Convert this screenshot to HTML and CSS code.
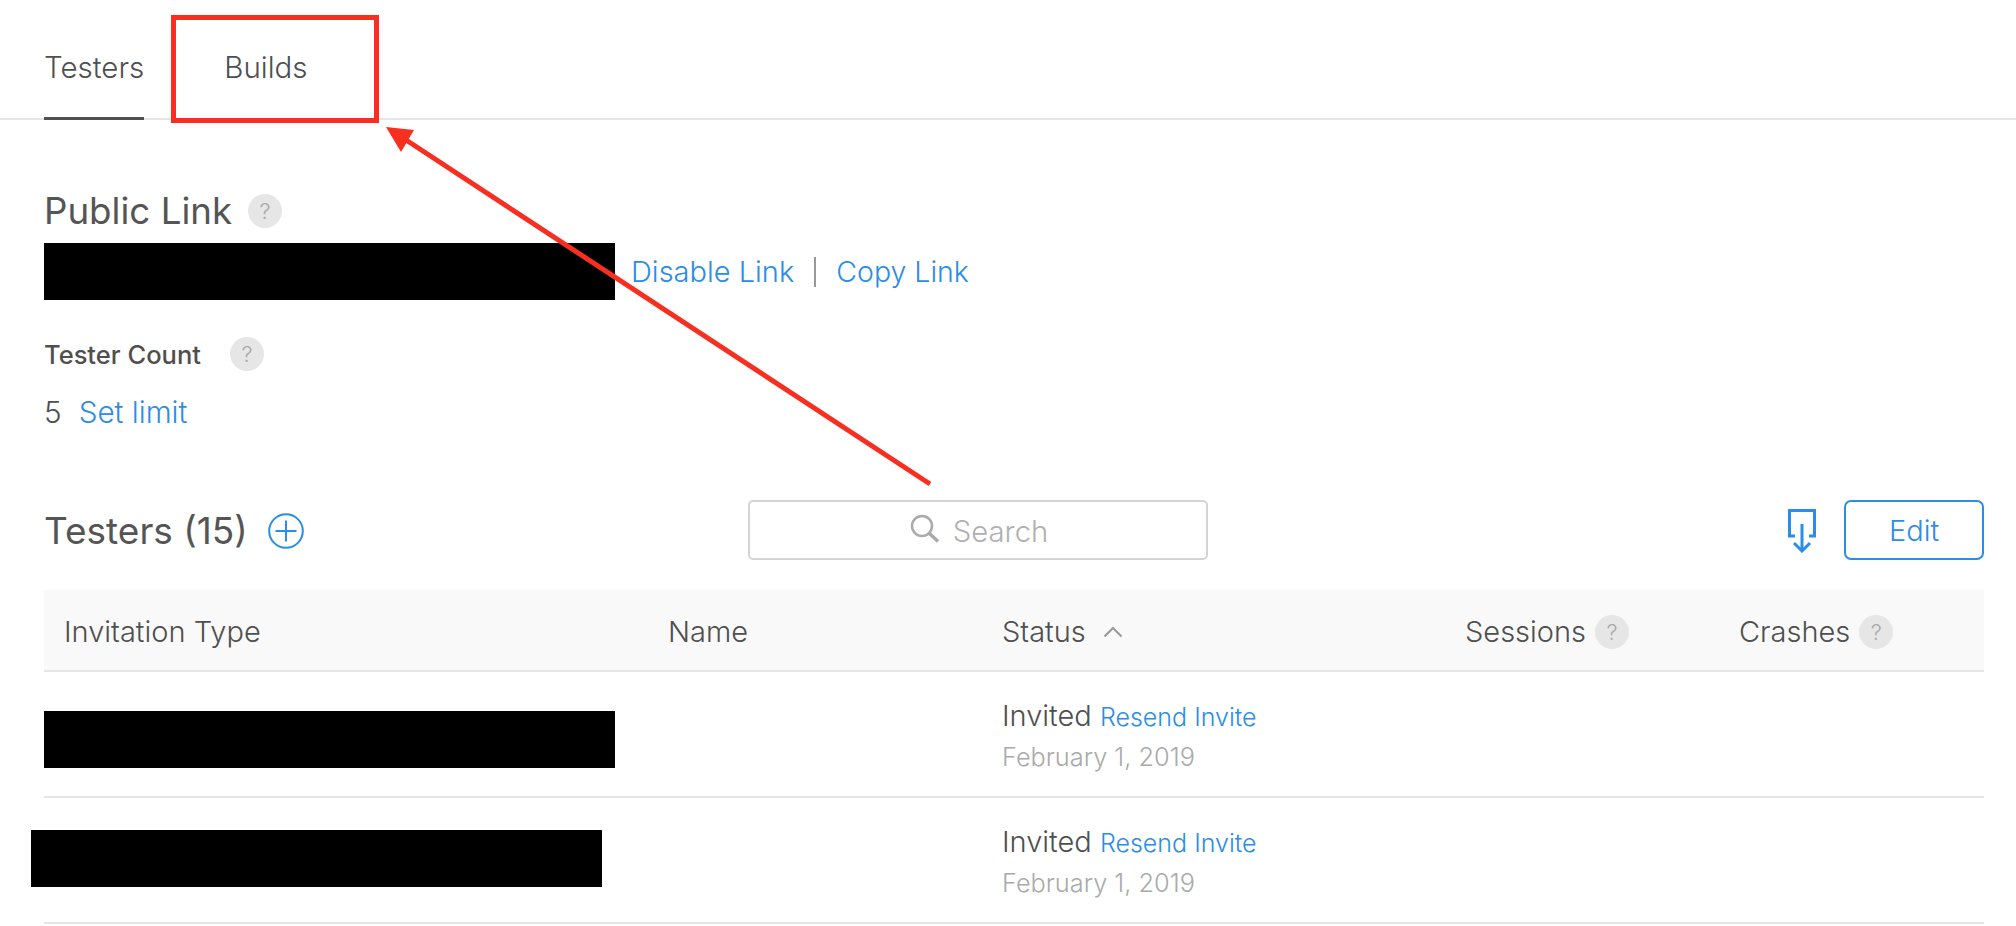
FILE: index.html
```html
<!DOCTYPE html>
<html lang="en">
<head>
<meta charset="utf-8">
<title>Testers</title>
<link rel="stylesheet" href="styles.css">
</head>
<body>
<div class="page">
  <nav class="tabs">
    <a class="tab tab-active">Testers</a>
    <a class="tab">Builds</a>
  </nav>

  <section class="public">
    <h2 class="title">Public Link <span class="help help-title">?</span></h2>
    <div class="link-row">
      <div class="redact"></div>
      <a class="link link-first">Disable Link</a>
      <span class="sep"></span>
      <a class="link link-copy">Copy Link</a>
    </div>
    <div class="count-label"><span>Tester Count</span><span class="help help-count">?</span></div>
    <div class="count-row"><span>5</span><a class="link">Set limit</a></div>
  </section>

  <section class="toolbar">
    <div class="toolbar-left">
      <h2 class="title title-large">Testers (15)</h2>
      <svg class="plus" viewBox="0 0 36 36" aria-hidden="true"><circle cx="18" cy="18" r="16.8"/><path d="M18 7.5v21M7.5 18h21"/></svg>
    </div>
    <div class="search">
      <svg class="search-icon" viewBox="0 0 30 30" aria-hidden="true"><circle cx="12" cy="12" r="10"/><path class="handle" d="M19.5 19.5l8.5 8"/></svg>
      <span>Search</span>
    </div>
    <div class="toolbar-right">
      <svg class="export" viewBox="0 0 28 44" aria-hidden="true"><path d="M7 27H1.500V1.500h25V27H21"/><path d="M14 15v27M6 34l8 8 8-8"/></svg>
      <button class="edit">Edit</button>
    </div>
  </section>

  <section class="table">
    <div class="thead">
      <div>Invitation Type</div>
      <div>Name</div>
      <div class="th-inline">Status <svg class="sort" viewBox="0 0 20 12" aria-hidden="true"><path d="M1.500 10.500L10 2l8.500 8.500"/></svg></div>
      <div class="th-inline">Sessions <span class="help help-th">?</span></div>
      <div class="th-inline">Crashes <span class="help help-th">?</span></div>
    </div>
    <div class="trow">
      <div class="redact redact-one"></div>
      <div class="status">
        <div class="status-line">Invited <a class="resend">Resend Invite</a></div>
        <div class="date">February 1, 2019</div>
      </div>
    </div>
    <div class="trow">
      <div class="redact redact-two"></div>
      <div class="status">
        <div class="status-line">Invited <a class="resend">Resend Invite</a></div>
        <div class="date">February 1, 2019</div>
      </div>
    </div>
  </section>

  <div class="callout-box"></div>
  <svg class="callout-arrow" viewBox="0 0 2016 926" aria-hidden="true">
    <path class="arrow-line" d="M930 484L400 136"/>
    <path class="arrow-head" d="M386 127L414 130L401 152Z"/>
  </svg>
</div>
</body>
</html>
```

FILE: styles.css
```css
* { box-sizing: border-box; }
html, body { margin: 0; height: 100%; }
body { background: #fff; color: #4f4f4f; font-family: Inter, "Liberation Sans", sans-serif; font-weight: 300; overflow: hidden; }
.page { position: relative; width: 2016px; height: 926px; overflow: hidden; }

.tabs { display: flex; gap: 80px; height: 120px; padding: 0 44px; border-bottom: 2px solid #e6e6e6; }
.tab { height: 120px; padding-top: 49px; font-size: 29.500px; line-height: 36px; }
.tab-active { border-bottom: 3px solid #505050; }

.public { padding: 71px 44px 0; }
.title { margin: 0; display: flex; align-items: center; font-size: 36.700px; font-weight: 400; line-height: 40px; color: #555; }
.title-large { font-size: 37px; }
.help { display: inline-flex; align-items: center; justify-content: center; border-radius: 50%; background: #e6e6e6; color: #aaa; font-weight: 300; flex: none; }
.help-title { width: 34px; height: 34px; margin-left: 16px; font-size: 22px; }
.link-row { display: flex; align-items: center; height: 57px; margin-top: 12px; font-size: 29px; }
.redact { width: 571px; height: 57px; background: #000; flex: none; }
.link { color: #2a8de6; text-decoration: none; }
.link-first { margin-left: 16px; }
.link-copy { font-size: 28.500px; }
.sep { width: 2px; height: 30px; margin: 0 20px 0 20px; background: #999; }
.count-label { display: flex; align-items: center; height: 34px; margin-top: 37px; font-size: 25.500px; font-weight: 500; }
.help-count { width: 34px; height: 34px; margin-left: 29px; font-size: 22px; }
.count-row { display: flex; gap: 17px; margin-top: 23px; font-size: 29.700px; line-height: 36px; }

.toolbar { display: grid; grid-template-columns: 704px 460px 1fr; align-items: center; height: 60px; margin: 70px 32px 0 44px; }
.toolbar-left { display: flex; align-items: center; padding-top: 2px; }
.plus { width: 36px; height: 36px; margin-left: 20px; fill: none; stroke: #2a8de6; stroke-width: 2; }
.search { display: flex; align-items: center; justify-content: center; gap: 13px; height: 60px; padding: 2px 0 0 2px; border: 2px solid #d4d4d4; border-radius: 5px; color: #b0b0b0; font-size: 29.300px; }
.search-icon { width: 30px; height: 30px; margin-bottom: 4px; fill: none; stroke: #aaa; stroke-width: 2.500; }
.handle { stroke-width: 3.500; }
.toolbar-right { display: flex; align-items: center; justify-content: flex-end; gap: 28px; }
.export { width: 28px; height: 44px; margin-top: 2px; fill: none; stroke: #2a8de6; stroke-width: 3; }
.edit { width: 140px; height: 60px; border: 2px solid #2a8de6; border-radius: 7px; background: #fff; color: #2a8de6; font: 300 29px Inter, "Liberation Sans", sans-serif; }

.table { margin: 30px 32px 0 44px; }
.thead, .trow { display: grid; grid-template-columns: 624px 334px 463px 274px 1fr; }
.thead { align-items: center; height: 82px; padding-top: 3px; border-bottom: 2px solid #e6e6e6; background: #f9f9f9; font-size: 29px; }
.thead > div:first-child { padding-left: 20px; }
.th-inline { display: flex; align-items: center; gap: 9px; }
.help-th { width: 34px; height: 34px; font-size: 22px; }
.sort { width: 20px; height: 12px; margin-left: 8px; fill: none; stroke: #999; stroke-width: 2; }
.trow { position: relative; align-items: start; height: 126px; border-bottom: 2px solid #e6e6e6; grid-template-columns: 958px 1fr; }
.redact-one { margin-top: 39px; }
.redact-two { margin-top: 32px; margin-left: -13px; }
.status { padding-top: 26px; }
.status-line { font-size: 29px; line-height: 36px; }
.resend { color: #2a8de6; font-size: 25px; }
.date { margin-top: 4px; color: #aaa; font-size: 25.300px; line-height: 36px; }

.callout-box { position: absolute; left: 171px; top: 15px; width: 208px; height: 108px; border: 5px solid #f72f20; }
.callout-arrow { position: absolute; left: 0; top: 0; width: 2016px; height: 926px; pointer-events: none; }
.arrow-line { fill: none; stroke: #f72f20; stroke-width: 5; }
.arrow-head { fill: #f72f20; }
```
